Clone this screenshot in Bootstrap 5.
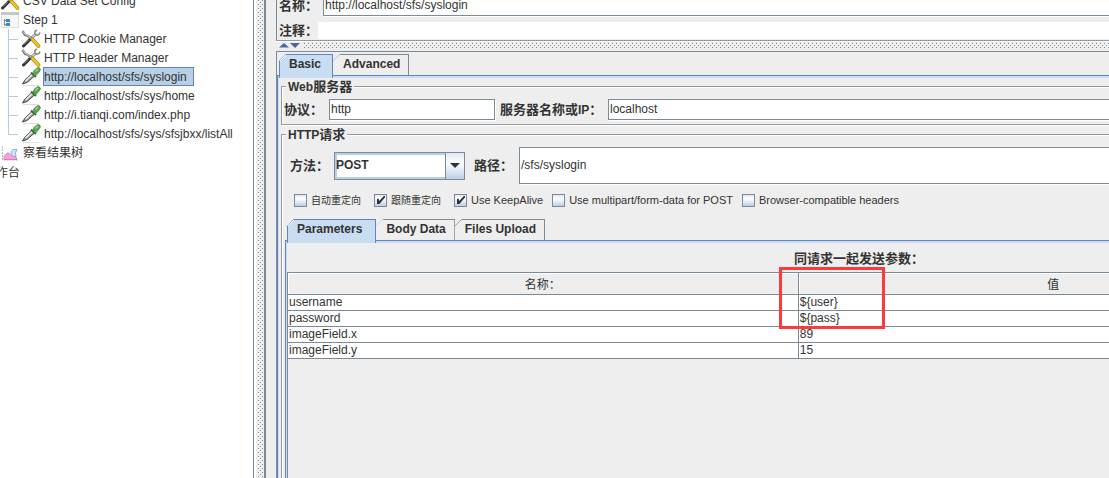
<!DOCTYPE html>
<html lang="zh-CN">
<head>
<meta charset="utf-8">
<meta name="viewport" content="width=device-width, initial-scale=1">
<title>HTTP Request</title>
<link href="https://cdn.jsdelivr.net/npm/bootstrap@5.3.0/dist/css/bootstrap.min.css" rel="stylesheet">
<style>
:root { --edge:#7a8a99; --blue:#6382bf; --sky:#c8ddf2; --face:#eee; --ink:#333; }
body { background:var(--face); color:var(--ink); font:12px/16px "Liberation Sans","Noto Sans CJK SC",sans-serif; }
.cjk { font-size:13px; }
.latin { font-size:12px; }
.tree { width:253px; background:#fff; }
.tree ul { margin-top:-9px; }
.tree li { height:19px; white-space:nowrap; }
.tree svg { width:20px; height:19px; flex:none; }
.node { color:var(--ink); text-decoration:none; padding:1px 2px 1px 0; margin-left:2px; line-height:17px; border:1px solid transparent; height:19px; }
.node.picked { background:#b8cfe5; border-color:var(--blue); padding-right:6px; }
.node.outdent { margin-left:-5px; padding:2px 0 0; }
.twig { width:11px; height:19px; margin:0 2px 0 8px; flex:none;
  background:linear-gradient(#b0cbe4,#b0cbe4) 0 0/1px 100% no-repeat, linear-gradient(#b0cbe4,#b0cbe4) 0 10px/10px 1px no-repeat; }
.twig.end { background-size:1px 11px,10px 1px; }
.split-v { width:13px; border-left:1px solid var(--edge); border-right:2px solid var(--edge); background:linear-gradient(90deg,#fff 2px,var(--face) 2px); padding-left:4px; }
.split-h { height:10px; padding:2px 0 2px 2px; }
.editor { padding-left:10px; }
.upper { border-left:1px solid var(--edge); border-bottom:1px solid #999; box-shadow:0 1px #fff; height:41px; padding:0 0 1px 2px; gap:6px; }
.upper label { line-height:17px; height:17px; }
.upper .name-label { width:44px; height:20px; line-height:20px; }
.field { border:1px solid var(--edge); box-shadow:1px 1px #fff; background:#fff; color:var(--ink); font-size:12px; line-height:16px; padding:0 1px 1px; border-radius:0; outline:0; min-width:0; height:21px; }
.field.tall { height:37px; }
.field.note { height:17px; }
.open-end { border-right:0; }
.lower { border:1px solid var(--edge); border-width:1px 0 0 1px; padding-top:2px; }
.tabs { border:0; position:relative; z-index:1; flex-wrap:nowrap; padding-left:2px; }
.tabs.inner { padding-left:5px; }
.tabs.nav-tabs .nav-link { border:1px solid var(--edge); border-bottom:0; border-left-color:transparent; border-radius:0; margin:0; padding:0 8px 2px 9px; height:21px; line-height:18px; font-weight:700; color:var(--ink);
  background:linear-gradient(135deg,var(--edge) 5px,transparent 5px) border-box var(--face);
  clip-path:polygon(7px 0,100% 0,100% 100%,0 100%,0 7px); }
.tabs.nav-tabs .nav-link.active { border-color:var(--blue); padding:0 11px 5px 9px; height:24px; margin-bottom:-3px;
  background:linear-gradient(135deg,var(--blue) 5px,#fff 5px 6px,transparent 6px) border-box var(--sky); }
.tabs.inner.nav-tabs .nav-link.active { padding-right:13px; }
.pane-box { border-left:1px solid var(--blue); border-top:1px solid var(--blue); }
.pane-in { border-left:1px solid var(--sky); border-top:2px solid var(--sky); }
.etched { border:1px solid #999; border-right:0; box-shadow:1px 1px #fff, inset 1px 1px #fff; margin:0 0 0 2px; }
.etched + .etched { margin-top:1px; }
.etched legend { float:none; width:auto; margin:0 0 0 4px; padding:0 2px; font-size:12px; line-height:18px; height:17px; font-weight:700; background:var(--face); }
.w-proto-label { width:47px; padding-left:2px; } .w-proto { width:166px; } .w-host-label { width:108px; margin-left:5px; }
.w-verb-label { width:52px; } .w-path-label { width:45px; margin-left:9px; }
.pick { width:131px; height:28px; }
.pick select { appearance:none; width:100%; height:28px; border:1px solid var(--edge); box-shadow:inset 0 0 0 2px #b8cfe5; background:#fff; color:var(--ink); font-weight:700; font-size:12px; padding:0 1px 2px; border-radius:0; }
.pick span { right:0; top:0; width:20px; height:28px; border:1px solid var(--edge); background:linear-gradient(#dde8f3,#fff 40%,#b8cfe5); pointer-events:none; }
.checks { padding:7px 0 9px 12px; gap:13px; }
.checks label { font-size:11px; line-height:19px; white-space:nowrap; }
.checks label.tiny { font-size:10px; }
.checks label.snug { margin-left:-4px; }
.checks input { appearance:none; width:13px; height:13px; margin:0 4px 0 0; border:1px solid var(--edge); background:linear-gradient(#dde8f3,#fff 35%,#b8cfe5); flex:none; }
.checks input:checked::before { content:""; display:block; width:8px; height:8px; margin:1px 0 0 2px; background:var(--ink); clip-path:polygon(0 35%,22% 35%,28% 62%,85% 0,100% 0,100% 20%,30% 100%,0 100%); }
.params-box { margin-left:3px; }
.gridpane { border-left:1px solid var(--edge); }
.wide-title { width:calc(100% + 322px); height:29px; line-height:31px; }
.params { width:calc(100% + 200px); table-layout:fixed; border-collapse:collapse; }
.params th { height:22px; font-weight:400; text-align:center; border:1px solid var(--edge); border-left:0; box-shadow:inset 1px 1px #fff; padding:2px 0 0; line-height:16px; position:relative; }
.params td { height:16px; line-height:15px; border:1px solid var(--edge); border-left:0; background:#fff; padding:0 1px; }
.marker { left:-20px; top:-6px; width:106px; height:62px; border:3px solid #fc3a3a; pointer-events:none; z-index:2; }
</style>
</head>
<body class="vh-100 overflow-hidden d-flex">
<svg width="0" height="0" class="position-absolute" aria-hidden="true">
  <defs>
    <pattern id="bumps" width="4" height="4" patternUnits="userSpaceOnUse">
      <path d="M0 0h1v1h-1zM2 2h1v1h-1z" fill="#7a8a99"/><path d="M1 1h1v1h-1zM3 3h1v1h-1z" fill="#fff"/>
    </pattern>
    <symbol id="tools" viewBox="0 0 20 19">
      <path d="M14.500 5.500L8 11" stroke="#777" stroke-width="2.600"/>
      <path d="M14.500 5.500L8 11" stroke="#ddd" stroke-width="1.200"/>
      <path d="M8.500 11L2.500 17" stroke="#333" stroke-width="3" stroke-linecap="round"/>
      <path d="M7.500 11L3 15.500" stroke="#999" stroke-width="1"/>
      <path d="M1.500 2l2.500 4 2.500 0.500L12.500 11" stroke="#777" stroke-width="2.400" fill="none"/>
      <path d="M2 2.500l2.500 3 2.500 1L12 11" stroke="#ddd" stroke-width="1" fill="none"/>
      <path d="M14.500 6q-2-3.500 1.500-5M14.500 5.500q3.500 1.500 4.500-2" stroke="#888" stroke-width="1.600" fill="none"/>
      <path d="M11.500 10.500L17.500 17" stroke="#a87a10" stroke-width="3.600" stroke-linecap="round"/>
      <path d="M11.500 10.500L17.500 17" stroke="#f5c61e" stroke-width="2.400" stroke-linecap="round"/>
    </symbol>
    <symbol id="dropper" viewBox="0 0 20 19">
      <path d="M2 18.500h16" stroke="#ddd"/>
      <path d="M1.500 17L4 13 11 6.500l2.500 2.500L6 15.500z" fill="#9ca79c" stroke="#444" stroke-width="1"/>
      <path d="M4.500 14l7-6.500" stroke="#f2f7f2" stroke-width="1.200"/>
      <path d="M10 5.500l5 4.500" stroke="#356b2e" stroke-width="2"/>
      <path d="M12 7l1-3.500 3-2.500q2-1 3 0.500t-0.500 3L16 7.500 14 9z" fill="#57a64a" stroke="#3a7c32" stroke-width="0.700"/>
      <path d="M14.500 4.500l2.500-2.500" stroke="#9ddb8e" stroke-width="1.400"/>
    </symbol>
    <symbol id="panel" viewBox="0 0 20 19">
      <path d="M1.500 2.500h17v15h-17z" fill="#f7f7f7" stroke="#ddd"/><path d="M1 2h18v3H1z" fill="#c5c8ca"/>
      <path d="M4.500 9v7M4.500 10.500h2M4.500 14.500h2" stroke="#888" fill="none"/>
      <path d="M6 9h4v3H6zM6 13h4v3H6z" fill="#3b86d1"/>
    </symbol>
    <symbol id="graph" viewBox="0 0 20 19">
      <path d="M2.500 3v14h16" stroke="#bbb" fill="none" stroke-dasharray="2 1"/>
      <path d="M4 16.500v-3l4-4 3 3 3-2 3 6z" fill="#f4a3dc" stroke="#da62ae" stroke-width="0.800"/>
      <path d="M17 6.500q-6-0.500-6 3 0 4.500 5 4-1.500-4 1-7z" fill="#cfe2fb" stroke="#85aee6"/>
    </symbol>
  </defs>
</svg>

<aside class="tree flex-shrink-0 overflow-hidden">
  <ul class="list-unstyled mb-0">
    <li class="d-flex"><svg><use href="#tools"/></svg><a class="node" href="#">CSV Data Set Config</a></li>
    <li class="d-flex"><svg><use href="#panel"/></svg><a class="node" href="#">Step 1</a></li>
    <li class="d-flex"><i class="twig"></i><svg><use href="#tools"/></svg><a class="node" href="#">HTTP Cookie Manager</a></li>
    <li class="d-flex"><i class="twig"></i><svg><use href="#tools"/></svg><a class="node" href="#">HTTP Header Manager</a></li>
    <li class="d-flex"><i class="twig"></i><svg><use href="#dropper"/></svg><a class="node picked" href="#">http://localhost/sfs/syslogin</a></li>
    <li class="d-flex"><i class="twig"></i><svg><use href="#dropper"/></svg><a class="node" href="#">http://localhost/sfs/sys/home</a></li>
    <li class="d-flex"><i class="twig"></i><svg><use href="#dropper"/></svg><a class="node" href="#">http://i.tianqi.com/index.php</a></li>
    <li class="d-flex"><i class="twig end"></i><svg><use href="#dropper"/></svg><a class="node" href="#">http://localhost/sfs/sys/sfsjbxx/listAll</a></li>
    <li class="d-flex"><svg><use href="#graph"/></svg><a class="node" href="#">察看结果树</a></li>
    <li class="d-flex"><a class="node outdent" href="#">作台</a></li>
  </ul>
</aside>
<div class="split-v flex-shrink-0"><svg class="d-block" width="6" height="100%" aria-hidden="true"><rect width="5" height="100%" fill="url(#bumps)"/></svg></div>

<main class="editor flex-fill d-flex flex-column overflow-hidden">
  <section class="upper flex-shrink-0 overflow-hidden d-flex flex-column justify-content-end">
    <div class="d-flex align-items-end flex-shrink-0">
      <label class="cjk fw-bold name-label" for="nm">名称：</label>
      <input id="nm" class="field open-end flex-fill" value="http://localhost/sfs/syslogin">
    </div>
    <div class="d-flex flex-shrink-0">
      <label class="cjk fw-bold" for="cm">注释：</label>
      <input id="cm" class="field note border-0 shadow-none flex-fill">
    </div>
  </section>
  <div class="split-h d-flex flex-shrink-0">
    <svg class="me-1 flex-shrink-0" width="22" height="5" aria-hidden="true"><path d="M1 4.500h10L6 0z" fill="#4a66a8"/><path d="M12 0h10l-5 5z" fill="#4a66a8"/></svg>
    <svg class="flex-fill" height="5" aria-hidden="true"><rect width="100%" height="5" fill="url(#bumps)"/></svg>
  </div>

  <section class="lower flex-fill d-flex flex-column overflow-hidden">
    <div class="nav nav-tabs tabs" role="tablist">
      <button class="nav-link active" type="button" role="tab">Basic</button>
      <button class="nav-link" type="button" role="tab">Advanced</button>
    </div>
    <div class="pane-box flex-fill d-flex flex-column overflow-hidden">
      <div class="pane-in flex-fill d-flex flex-column overflow-hidden">
        <fieldset class="etched">
          <legend>Web<span class="cjk">服务器</span></legend>
          <div class="d-flex align-items-center py-1">
            <label class="cjk fw-bold w-proto-label" for="proto">协议：</label>
            <input id="proto" class="field w-proto" value="http">
            <label class="cjk fw-bold text-nowrap w-host-label" for="host">服务器名称或<span class="latin">IP</span>：</label>
            <input id="host" class="field open-end flex-fill" value="localhost">
          </div>
        </fieldset>
        <fieldset class="etched flex-fill d-flex flex-column border-bottom-0">
          <legend>HTTP<span class="cjk">请求</span></legend>
          <div class="d-flex align-items-center pt-1">
            <label class="cjk fw-bold ps-2 w-verb-label" for="verb">方法：</label>
            <div class="pick position-relative flex-shrink-0">
              <select id="verb"><option>POST</option><option>GET</option></select>
              <span class="position-absolute d-flex align-items-center justify-content-center"><svg width="10" height="6" aria-hidden="true"><path d="M0 0h10L5 5z" fill="#333"/></svg></span>
            </div>
            <label class="cjk fw-bold text-nowrap w-path-label" for="path">路径：</label>
            <input id="path" class="field tall open-end flex-fill" value="/sfs/syslogin">
          </div>
          <div class="checks d-flex">
            <label class="d-flex align-items-center tiny"><input type="checkbox">自动重定向</label>
            <label class="d-flex align-items-center tiny"><input type="checkbox" checked>跟随重定向</label>
            <label class="d-flex align-items-center"><input type="checkbox" checked>Use KeepAlive</label>
            <label class="d-flex align-items-center snug"><input type="checkbox">Use multipart/form-data for POST</label>
            <label class="d-flex align-items-center snug"><input type="checkbox">Browser-compatible headers</label>
          </div>
          <div class="nav nav-tabs tabs inner" role="tablist">
            <button class="nav-link active" type="button" role="tab">Parameters</button>
            <button class="nav-link" type="button" role="tab">Body Data</button>
            <button class="nav-link" type="button" role="tab">Files Upload</button>
          </div>
          <div class="pane-box params-box flex-fill d-flex">
            <div class="pane-in flex-fill">
              <div class="wide-title cjk fw-bold text-center">同请求一起发送参数：</div>
              <div class="gridpane h-100">
                <table class="params">
                  <thead><tr><th>名称：</th><th>值<span class="marker position-absolute"></span></th></tr></thead>
                  <tbody>
                    <tr><td>username</td><td>${user}</td></tr>
                    <tr><td>password</td><td>${pass}</td></tr>
                    <tr><td>imageField.x</td><td>89</td></tr>
                    <tr><td>imageField.y</td><td>15</td></tr>
                  </tbody>
                </table>
              </div>
            </div>
          </div>
        </fieldset>
      </div>
    </div>
  </section>
</main>
<script src="https://cdn.jsdelivr.net/npm/bootstrap@5.3.0/dist/js/bootstrap.bundle.min.js"></script>
</body>
</html>
